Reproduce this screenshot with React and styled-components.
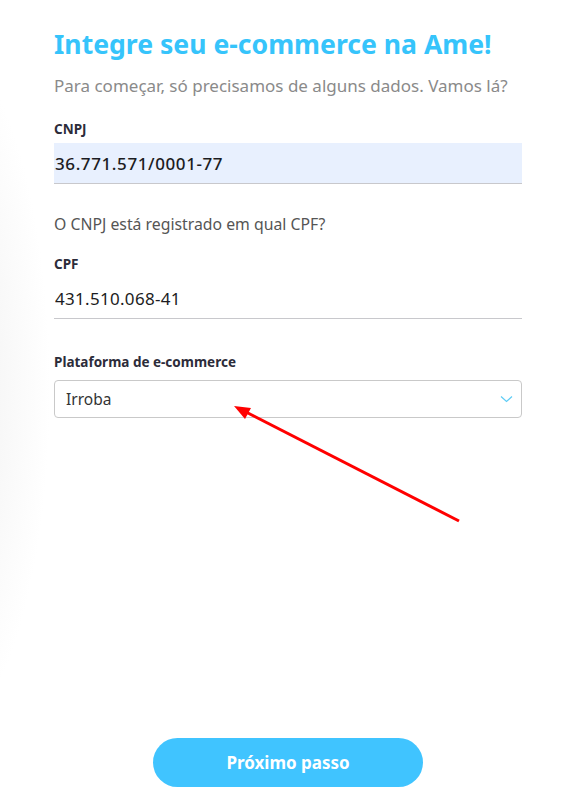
import React from "react";
import styled, { createGlobalStyle } from "styled-components";

const GlobalStyle = createGlobalStyle`
  body {
    margin: 0;
    background: #fff radial-gradient(ellipse 120px 360px at -70px 390px, #efefef 0%, #f7f7f7 55%, #fff 100%) no-repeat;
    font-family: "Noto Sans", "Open Sans", sans-serif;
  }
`;

const Page = styled.div`
  position: relative;
  min-height: 805px;
  box-sizing: border-box;
  display: flex;
  flex-direction: column;
  padding: 28px 59px 18px 54px;
`;

const Title = styled.h1`
  margin: 0;
  font-size: 26.6px;
  line-height: 32px;
  font-weight: 700;
  color: #36c4fb;
`;

const Subtitle = styled.p`
  margin: 15px 0 0;
  font-size: 17px;
  line-height: 22px;
  color: #8a8a8a;
`;

const Label = styled.label`
  display: block;
  margin-top: ${(p) => p.$top}px;
  font-size: 13.5px;
  line-height: 16px;
  font-weight: 700;
  color: #2c2c3a;
`;

const Input = styled.input`
  display: block;
  width: 100%;
  box-sizing: border-box;
  height: 41px;
  margin-top: 6px;
  padding: 0 1px;
  border: none;
  border-bottom: 1px solid #c8c8cc;
  background: ${(p) => (p.$filled ? "#e8f0fe" : "transparent")};
  font-family: inherit;
  font-size: 17px;
  font-weight: ${(p) => (p.$filled ? 500 : 400)};
  letter-spacing: ${(p) => (p.$filled ? "0.6px" : "0.3px")};
  color: #1c1c22;
  outline: none;
`;

const Question = styled.p`
  margin: 30px 0 0;
  font-size: 15.8px;
  line-height: 20px;
  color: #555;
`;

const SelectBox = styled.div`
  margin-top: 10px;
  height: 38px;
  box-sizing: border-box;
  border: 1px solid #c9c9c9;
  border-radius: 4px;
  display: flex;
  align-items: center;
  justify-content: space-between;
  padding: 0 8px 0 11px;
  font-size: 15.5px;
  color: #333;
`;

const Footer = styled.div`
  margin-top: auto;
  display: flex;
  justify-content: center;
`;

const Button = styled.button`
  width: 270px;
  height: 49px;
  border: none;
  border-radius: 25px;
  background: #40c4ff;
  color: #fff;
  font-family: inherit;
  font-size: 17px;
  font-weight: 700;
  cursor: pointer;
`;

const Annotation = styled.svg`
  position: absolute;
  left: 0;
  top: 0;
  pointer-events: none;
`;

export default function App() {
  return (
    <>
      <GlobalStyle />
      <Page>
        <Title>Integre seu e-commerce na Ame!</Title>
        <Subtitle>Para começar, só precisamos de alguns dados. Vamos lá?</Subtitle>

        <Label $top={24}>CNPJ</Label>
        <Input $filled defaultValue="36.771.571/0001-77" />

        <Question>O CNPJ está registrado em qual CPF?</Question>

        <Label $top={22}>CPF</Label>
        <Input defaultValue="431.510.068-41" />

        <Label $top={35}>Plataforma de e-commerce</Label>
        <SelectBox>
          <span>Irroba</span>
          <svg width="13" height="8" viewBox="0 0 13 8">
            <path d="M1 1.5 L6.5 6.5 L12 1.5" fill="none" stroke="#5fcdf6" strokeWidth="1.2" />
          </svg>
        </SelectBox>

        <Footer>
          <Button>Próximo passo</Button>
        </Footer>

        <Annotation width="581" height="805" viewBox="0 0 581 805">
          <line x1="459" y1="521" x2="244" y2="411" stroke="#f00" strokeWidth="3" />
          <polygon points="234,406 251,408 245,419" fill="#f00" />
        </Annotation>
      </Page>
    </>
  );
}
